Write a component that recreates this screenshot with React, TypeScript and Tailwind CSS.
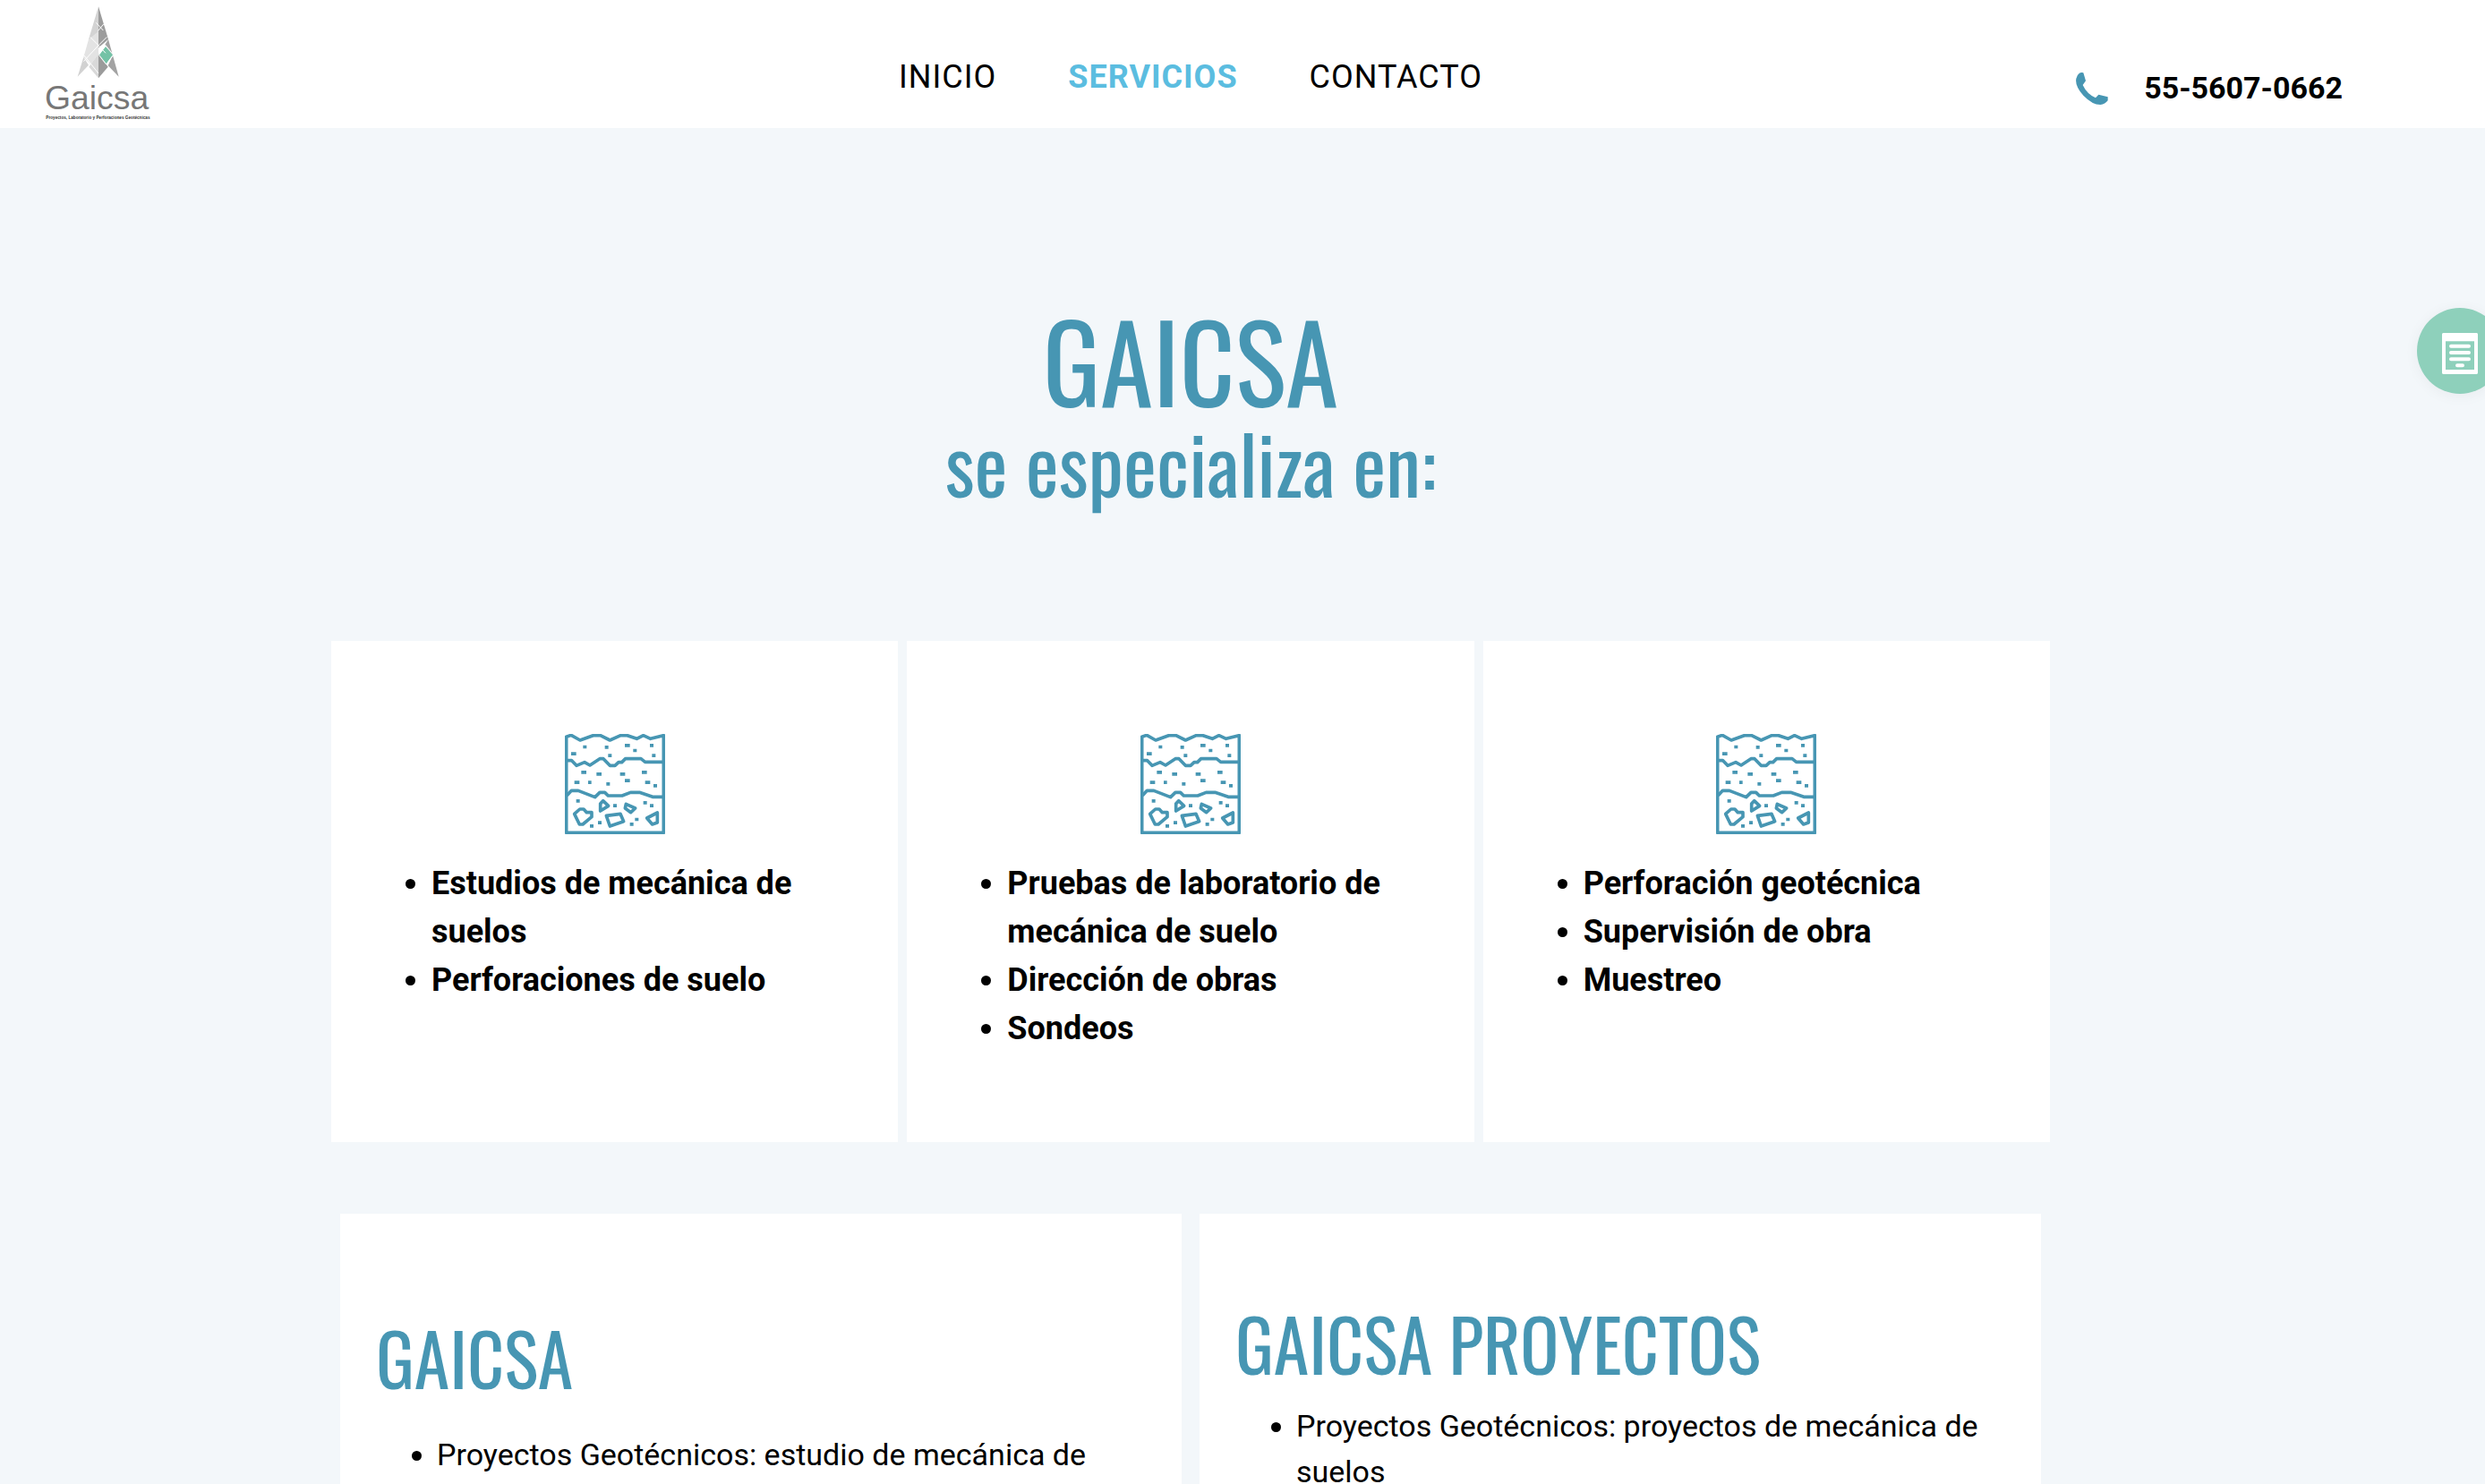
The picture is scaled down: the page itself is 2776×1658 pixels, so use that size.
const nav = [
  { label: "INICIO", active: false },
  { label: "SERVICIOS", active: true },
  { label: "CONTACTO", active: false },
];

const services = [
  ["Estudios de mecánica de suelos", "Perforaciones de suelo"],
  ["Pruebas de laboratorio de mecánica de suelo", "Dirección de obras", "Sondeos"],
  ["Perforación geotécnica", "Supervisión de obra", "Muestreo"],
];

const heading = "font-['Oswald','Liberation_Sans_Narrow',sans-serif] font-normal text-[#4796b3]";

function Logo() {
  return (
    <svg viewBox="60 15 360 390" className="h-[130px] w-[120px]" role="img" aria-label="Gaicsa">
      <path d="M240 22L207 132L240 160Z" fill="#d3d3d3" />
      <path d="M240 22L273 132L240 160Z" fill="#9c9c9c" />
      <path d="M240 105L207 132L190 192L214 216L240 180Z" fill="#e3e3e3" />
      <path d="M190 192L170 257L207 218Z" fill="#d2d2d2" />
      <path d="M240 180L208 224L240 262Z" fill="#d9d9d9" />
      <path d="M240 180L272 224L240 262Z" fill="#9b9b9b" />
      <path d="M273 132L308 257L272 220L288 185L262 150Z" fill="#a3a3a3" />
      <path d="M264 156L288 184L266 214L243 184Z" fill="#74c2a6" />
      <path
        d="M232 76L256 102M258 80L238 104M212 124L240 152L264 178M268 124L240 152L190 206M192 186L240 246M264 152L290 184L266 216L241 184Z"
        fill="none"
        stroke="#fff"
        strokeWidth="3"
      />
      <text x="60" y="365" className="font-['Liberation_Sans',sans-serif] text-[112px]" fill="#777">
        Gaicsa
      </text>
      <text x="64" y="399" className="font-['Liberation_Sans',sans-serif] text-[14px] font-bold" fill="#333">
        Proyectos, Laboratorio y Perforaciones Geotécnicas
      </text>
    </svg>
  );
}

function SoilIcon() {
  return (
    <svg viewBox="63 60 336 336" className="mx-auto size-28 text-[#4796b3]" aria-hidden="true">
      <g fill="none" stroke="currentColor" strokeWidth="11" strokeLinejoin="round">
        <path d="M68 391V70L84 64L114 81L158 65H182L214 81L250 65H272L304 76L326 65L350 76L394 65V391Z" />
        <path d="M68 149H86L102 166L129 155L147 165L180 143H192L214 166H231L243 155H254L266 143H318L332 154H394" />
        <path d="M70 266L85 250H108L164 272L180 256H197L208 267H255L283 256H313L357 271H394" />
        <path d="M95 328L113 312H126L136 323H153V338L123 363H112Z" />
        <path d="M182 318V294L191 284L209 301Z" />
        <path d="M202 334L249 328L260 353L214 369Z" />
        <path d="M268 295L299 309L284 323L265 309Z" />
        <path d="M373 324V357L356 363L338 342Z" />
      </g>
      <path
        fill="currentColor"
        d="M124 98h12v11h-12zM197 99h12v11h-12zM264 93h17v11h-17zM348 93h12v11h-12zM292 110h12v11h-12zM84 121h17v11h-17zM208 127h12v11h-12zM355 127h12v11h-12zM118 183h17v11h-17zM169 189h17v11h-17zM248 189h17v11h-17zM321 183h17v11h-17zM95 217h17v11h-17zM141 217h11v11h-11zM202 222h12v11h-12zM264 211h17v11h-17zM332 217h17v11h-17zM360 228h12v11h-12zM101 279h12v11h-12zM225 295h12v11h-12zM326 285h12v11h-12zM348 295h12v11h-12zM174 352h12v11h-12zM147 363h12v11h-12zM298 341h12v11h-12zM281 357h12v11h-12z"
      />
    </svg>
  );
}

function Header() {
  return (
    <header className="grid h-[143px] grid-cols-[1fr_auto_1fr] items-start bg-white pr-[116px]">
      <a href="#inicio" className="ml-[50px] mt-[5px] w-fit">
        <Logo />
      </a>
      <nav className="mt-[59px] flex gap-20 text-4xl leading-[54px]">
        {nav.map((item) => (
          <a
            key={item.label}
            href={`#${item.label.toLowerCase()}`}
            className={item.active ? "font-bold tracking-[1px] text-[#5bbde0]" : "tracking-[1px]"}
          >
            {item.label}
          </a>
        ))}
      </nav>
      <a
        href="tel:5556070662"
        className="mr-[43px] mt-[73px] flex items-center gap-10 justify-self-end text-[34px] font-bold leading-[51px]"
      >
        <svg viewBox="0 0 108 108" className="size-9 text-[#4796b3]" fill="currentColor" aria-hidden="true">
          <path d="M11 3Q16-1 25 1L33 28L23 42Q37 72 66 85L76 74L107 82V94Q98 106 82 108Q55 108 25 77Q-4 45 1 20Q3 9 11 3Z" />
        </svg>
        55-5607-0662
      </a>
    </header>
  );
}

export default function App() {
  return (
    <div className="relative h-screen overflow-hidden bg-[#f3f7fa] font-['Roboto',sans-serif] text-black">
      <Header />
      <main className="pr-[116px]">
        <h1 className={`${heading} pt-[188px] text-center`}>
          <span className="block text-[120px] leading-[140px]">GAICSA</span>
          <span className="block text-[88px] leading-[90px]">se especializa en:</span>
        </h1>
        <section className="mx-auto mt-[155px] grid w-full max-w-[1920px] grid-cols-3 gap-2.5">
          {services.map((items) => (
            <article key={items[0]} className="min-h-[560px] bg-white pb-20 pl-28 pr-20 pt-[104px]">
              <div className="-ml-8">
                <SoilIcon />
              </div>
              <ul className="mt-[28px] list-disc text-4xl font-bold leading-[54px]">
                {items.map((item) => (
                  <li key={item}>{item}</li>
                ))}
              </ul>
            </article>
          ))}
        </section>
        <section className="mx-auto mt-20 grid w-full max-w-[1900px] grid-cols-2 gap-5">
          <article className="bg-white px-10 pb-20 pt-28">
            <h2 className={`${heading} text-[80px] leading-[96px]`}>GAICSA</h2>
            <ul className="mt-9 list-disc pl-[68px] pr-4 text-[34px] leading-[51px]">
              <li>Proyectos Geotécnicos: estudio de mecánica de suelos</li>
            </ul>
          </article>
          <article className="bg-white px-10 pb-20 pt-24">
            <h2 className={`${heading} text-[80px] leading-[96px]`}>GAICSA PROYECTOS</h2>
            <ul className="mt-5 list-disc pl-[68px] pr-4 text-[34px] leading-[51px]">
              <li>Proyectos Geotécnicos: proyectos de mecánica de suelos</li>
            </ul>
          </article>
        </section>
      </main>
      <button
        type="button"
        aria-label="Formulario"
        className="absolute -right-5 top-[344px] flex size-24 items-center rounded-full bg-[#8ed0bb] pl-7 pt-1.5 shadow-[0_2px_16px_rgba(0,0,0,0.05)]"
      >
        <svg viewBox="0 0 120 138" className="h-[46px] w-10" aria-hidden="true">
          <path fill="#fff" fillRule="evenodd" d="M3 0H117L120 3V135L117 138H3L0 135V3ZM12 28V123H108V28Z" />
          <path d="M30 44H90M30 66H90M30 88H90M51 109H69" stroke="#fff" strokeWidth="12" strokeLinecap="round" />
        </svg>
      </button>
    </div>
  );
}
